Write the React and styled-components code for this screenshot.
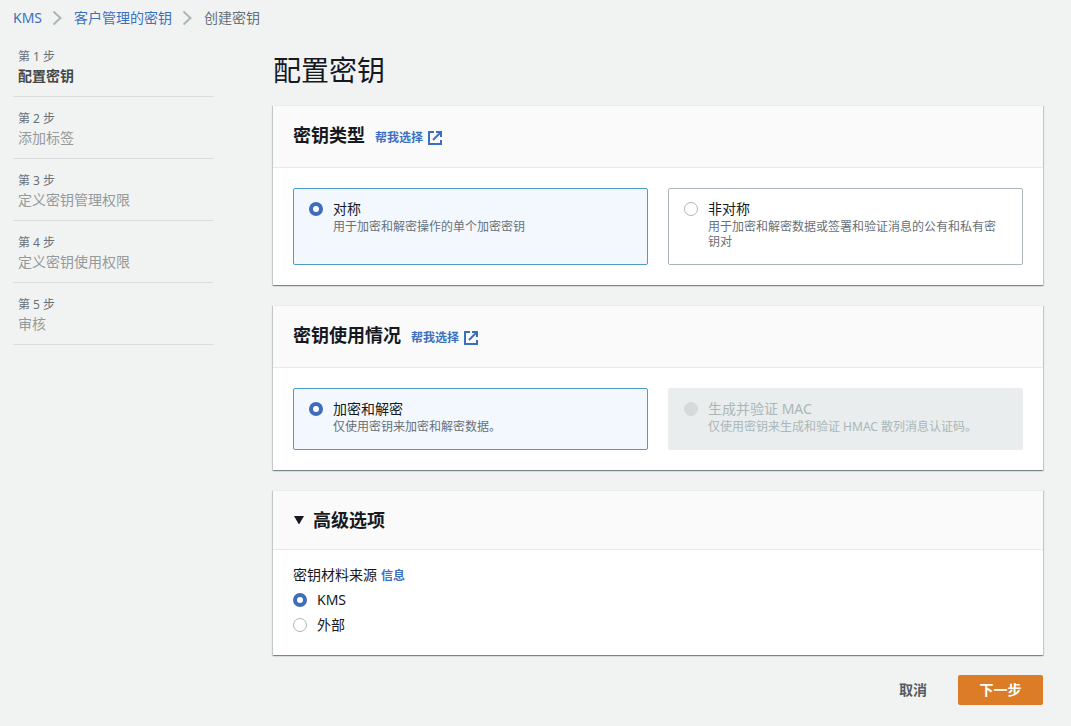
import React, { useState } from 'react'
import styled, { createGlobalStyle } from 'styled-components'

const GlobalStyle = createGlobalStyle`
  * {
    box-sizing: border-box;
  }
  body {
    margin: 0;
    background: #f1f3f3;
    color: #16191f;
    font-family: 'Noto Sans', 'Noto Sans CJK SC', sans-serif;
    font-size: 14px;
    line-height: 20px;
  }
  button {
    font-family: inherit;
  }
`

const Breadcrumb = styled.nav`
  padding: 8px 13px 7px;

  ol {
    display: flex;
    align-items: center;
    gap: 10px;
    margin: 0;
    padding: 0;
    list-style: none;
  }
  li {
    display: flex;
    align-items: center;
    gap: 10px;
    color: #687078;
  }
`
const Link = styled.a`
  color: #3b70bf;
  text-decoration: none;
`
const Layout = styled.div`
  display: grid;
  grid-template-columns: 200px minmax(0, 1fr);
  column-gap: 60px;
  padding: 0 28px 20px 13px;
`
const Steps = styled.ol`
  margin: 0;
  padding: 0;
  list-style: none;
`
const Step = styled.li`
  padding: 13px 5px 10px;
  border-bottom: 1px solid #dbdede;
`
const StepLabel = styled.div`
  color: #687078;
  font-size: 12px;
  line-height: 18px;
`
const StepName = styled.div`
  color: ${({ $active }) => ($active ? '#444746' : '#959a9a')};
  font-weight: ${({ $active }) => ($active ? 700 : 400)};
`
const PageTitle = styled.h1`
  margin: 17px 0;
  font-size: 28px;
  font-weight: 400;
  line-height: 36px;
`
const Panel = styled.section`
  margin-bottom: 20px;
  background: #fff;
  border-top: 1px solid #eaeded;
  box-shadow: 0 1px 1px 0 rgba(0, 28, 36, 0.3), 1px 1px 1px 0 rgba(0, 28, 36, 0.15),
    -1px 1px 1px 0 rgba(0, 28, 36, 0.15);
`
const PanelHeader = styled.header`
  display: flex;
  align-items: baseline;
  gap: 10px;
  padding: ${({ $compact }) => ($compact ? '18px 20px' : '17px 20px 20px')};
  background: #fafafa;
  border-bottom: 1px solid #e6eaea;
`
const PanelTitle = styled.h2`
  margin: 0;
  font-size: 18px;
  font-weight: 700;
  line-height: ${({ $compact }) => ($compact ? '22px' : '24px')};
`
const HelpLink = styled(Link)`
  display: inline-flex;
  align-items: center;
  gap: 5px;
  font-size: 12px;
  font-weight: 700;
  line-height: 18px;
`
const InfoLink = styled(Link)`
  font-size: 12px;
  font-weight: 700;
  line-height: 18px;
`
const ExpandButton = styled.button`
  display: flex;
  align-items: center;
  gap: 8px;
  padding: 0;
  border: 0;
  background: none;
  color: inherit;
  font-size: 18px;
  font-weight: 700;
  line-height: 22px;
  cursor: pointer;

  svg {
    transform: ${({ $open }) => ($open ? 'none' : 'rotate(-90deg)')};
  }
`
const Tiles = styled.div`
  display: grid;
  grid-template-columns: 1fr 1fr;
  gap: 20px;
  padding: 20px;
`
const tileColors = {
  selected: { background: '#f3f8ff', border: '#4d9cc8' },
  normal: { background: '#fff', border: '#aab7b8' },
  disabled: { background: '#e9edee', border: '#e9edee' },
}
const TileBox = styled.label`
  display: flex;
  align-items: flex-start;
  gap: 10px;
  padding: 10px 15px 15px;
  border: 1px solid ${({ $state }) => tileColors[$state].border};
  border-radius: 2px;
  background: ${({ $state }) => tileColors[$state].background};
  color: ${({ $state }) => ($state === 'disabled' ? '#aab7b8' : 'inherit')};
`
const TileText = styled.span`
  display: block;
`
const TileTitle = styled.span`
  display: block;
`
const TileDescription = styled.span`
  display: block;
  color: ${({ $disabled }) => ($disabled ? '#aab7b8' : '#687078')};
  font-size: 12px;
  line-height: 15px;
`
const Radio = styled.input.attrs({ type: 'radio' })`
  appearance: none;
  flex: none;
  width: 14px;
  height: 14px;
  margin: 3px 0;
  border: 1px solid #aab7b8;
  border-radius: 50%;
  background: #fff;

  &:checked {
    border: 4px solid #3f6dbb;
  }
  &:disabled {
    border-color: #d5dbdb;
    background: #d5dbdb;
  }
`
const Origin = styled.fieldset`
  display: flex;
  flex-direction: column;
  gap: 5px;
  margin: 0;
  padding: 15px 20px 20px;
  border: 0;
`
const OriginLabel = styled.div`
  display: flex;
  align-items: baseline;
  gap: 4px;
`
const OriginOption = styled.label`
  display: flex;
  gap: 10px;
`
const Actions = styled.div`
  display: flex;
  justify-content: flex-end;
  gap: 10px;
`
const Button = styled.button`
  min-width: 85px;
  height: 30px;
  padding: 0 21px;
  border: 0;
  border-radius: 2px;
  background: ${({ $primary }) => ($primary ? '#dc7c27' : 'transparent')};
  color: ${({ $primary }) => ($primary ? '#fff' : '#545b64')};
  font-size: 14px;
  font-weight: 700;
  line-height: 20px;
`
const LinkButton = styled(Button)`
  min-width: 0;
`

const Chevron = () => (
  <svg width="12" height="16" viewBox="0 0 12 16" fill="none" stroke="#aab7b8" strokeWidth="2" aria-hidden="true">
    <path d="M1.5 1.5 L8.5 8 L1.5 14.5" />
  </svg>
)

const ExternalIcon = () => (
  <svg width="14" height="14" viewBox="0 0 14 14" fill="none" stroke="currentColor" strokeWidth="2" aria-hidden="true">
    <path d="M6 1 H1 V13 H13 V9" />
    <path d="M8 1 H13 V6" />
    <path d="M13 1 L5 9" />
  </svg>
)

const Caret = () => (
  <svg width="12" height="10" viewBox="0 0 12 10" aria-hidden="true">
    <path d="M1 1 H11 L6.6 8.4 Q6 9.4 5.4 8.4 Z" fill="#16191f" />
  </svg>
)

const steps = ['配置密钥', '添加标签', '定义密钥管理权限', '定义密钥使用权限', '审核']

const Tile = ({ name, value, current, onChange, title, description, disabled }) => {
  const checked = current === value
  return (
    <TileBox $state={disabled ? 'disabled' : checked ? 'selected' : 'normal'}>
      <Radio name={name} value={value} checked={checked} disabled={disabled} onChange={() => onChange(value)} />
      <TileText>
        <TileTitle>{title}</TileTitle>
        <TileDescription $disabled={disabled}>{description}</TileDescription>
      </TileText>
    </TileBox>
  )
}

const TilePanel = ({ title, children }) => (
  <Panel>
    <PanelHeader>
      <PanelTitle>{title}</PanelTitle>
      <HelpLink href="#help">
        帮我选择
        <ExternalIcon />
      </HelpLink>
    </PanelHeader>
    <Tiles role="radiogroup" aria-label={title}>
      {children}
    </Tiles>
  </Panel>
)

const App = () => {
  const [keyType, setKeyType] = useState('symmetric')
  const [usage, setUsage] = useState('encrypt')
  const [origin, setOrigin] = useState('kms')
  const [open, setOpen] = useState(true)

  return (
    <>
      <GlobalStyle />
      <Breadcrumb aria-label="导航">
        <ol>
          <li>
            <Link href="#kms">KMS</Link>
            <Chevron />
          </li>
          <li>
            <Link href="#keys">客户管理的密钥</Link>
            <Chevron />
          </li>
          <li aria-current="page">创建密钥</li>
        </ol>
      </Breadcrumb>
      <Layout>
        <Steps>
          {steps.map((name, i) => (
            <Step key={name}>
              <StepLabel>{`第 ${i + 1} 步`}</StepLabel>
              <StepName $active={i === 0}>{name}</StepName>
            </Step>
          ))}
        </Steps>
        <main>
          <PageTitle>配置密钥</PageTitle>
          <TilePanel title="密钥类型">
            <Tile
              name="keyType"
              value="symmetric"
              current={keyType}
              onChange={setKeyType}
              title="对称"
              description="用于加密和解密操作的单个加密密钥"
            />
            <Tile
              name="keyType"
              value="asymmetric"
              current={keyType}
              onChange={setKeyType}
              title="非对称"
              description="用于加密和解密数据或签署和验证消息的公有和私有密钥对"
            />
          </TilePanel>
          <TilePanel title="密钥使用情况">
            <Tile
              name="usage"
              value="encrypt"
              current={usage}
              onChange={setUsage}
              title="加密和解密"
              description="仅使用密钥来加密和解密数据。"
            />
            <Tile
              name="usage"
              value="mac"
              current={usage}
              onChange={setUsage}
              title="生成并验证 MAC"
              description="仅使用密钥来生成和验证 HMAC 散列消息认证码。"
              disabled
            />
          </TilePanel>
          <Panel>
            <PanelHeader $compact>
              <PanelTitle $compact>
                <ExpandButton $open={open} aria-expanded={open} onClick={() => setOpen(!open)}>
                  <Caret />
                  高级选项
                </ExpandButton>
              </PanelTitle>
            </PanelHeader>
            {open && (
              <Origin role="radiogroup" aria-labelledby="origin-label">
                <OriginLabel>
                  <span id="origin-label">密钥材料来源</span>
                  <InfoLink href="#info">信息</InfoLink>
                </OriginLabel>
                <OriginOption>
                  <Radio name="origin" checked={origin === 'kms'} onChange={() => setOrigin('kms')} />
                  KMS
                </OriginOption>
                <OriginOption>
                  <Radio name="origin" checked={origin === 'external'} onChange={() => setOrigin('external')} />
                  外部
                </OriginOption>
              </Origin>
            )}
          </Panel>
          <Actions>
            <LinkButton>取消</LinkButton>
            <Button $primary>下一步</Button>
          </Actions>
        </main>
      </Layout>
    </>
  )
}

export default App
